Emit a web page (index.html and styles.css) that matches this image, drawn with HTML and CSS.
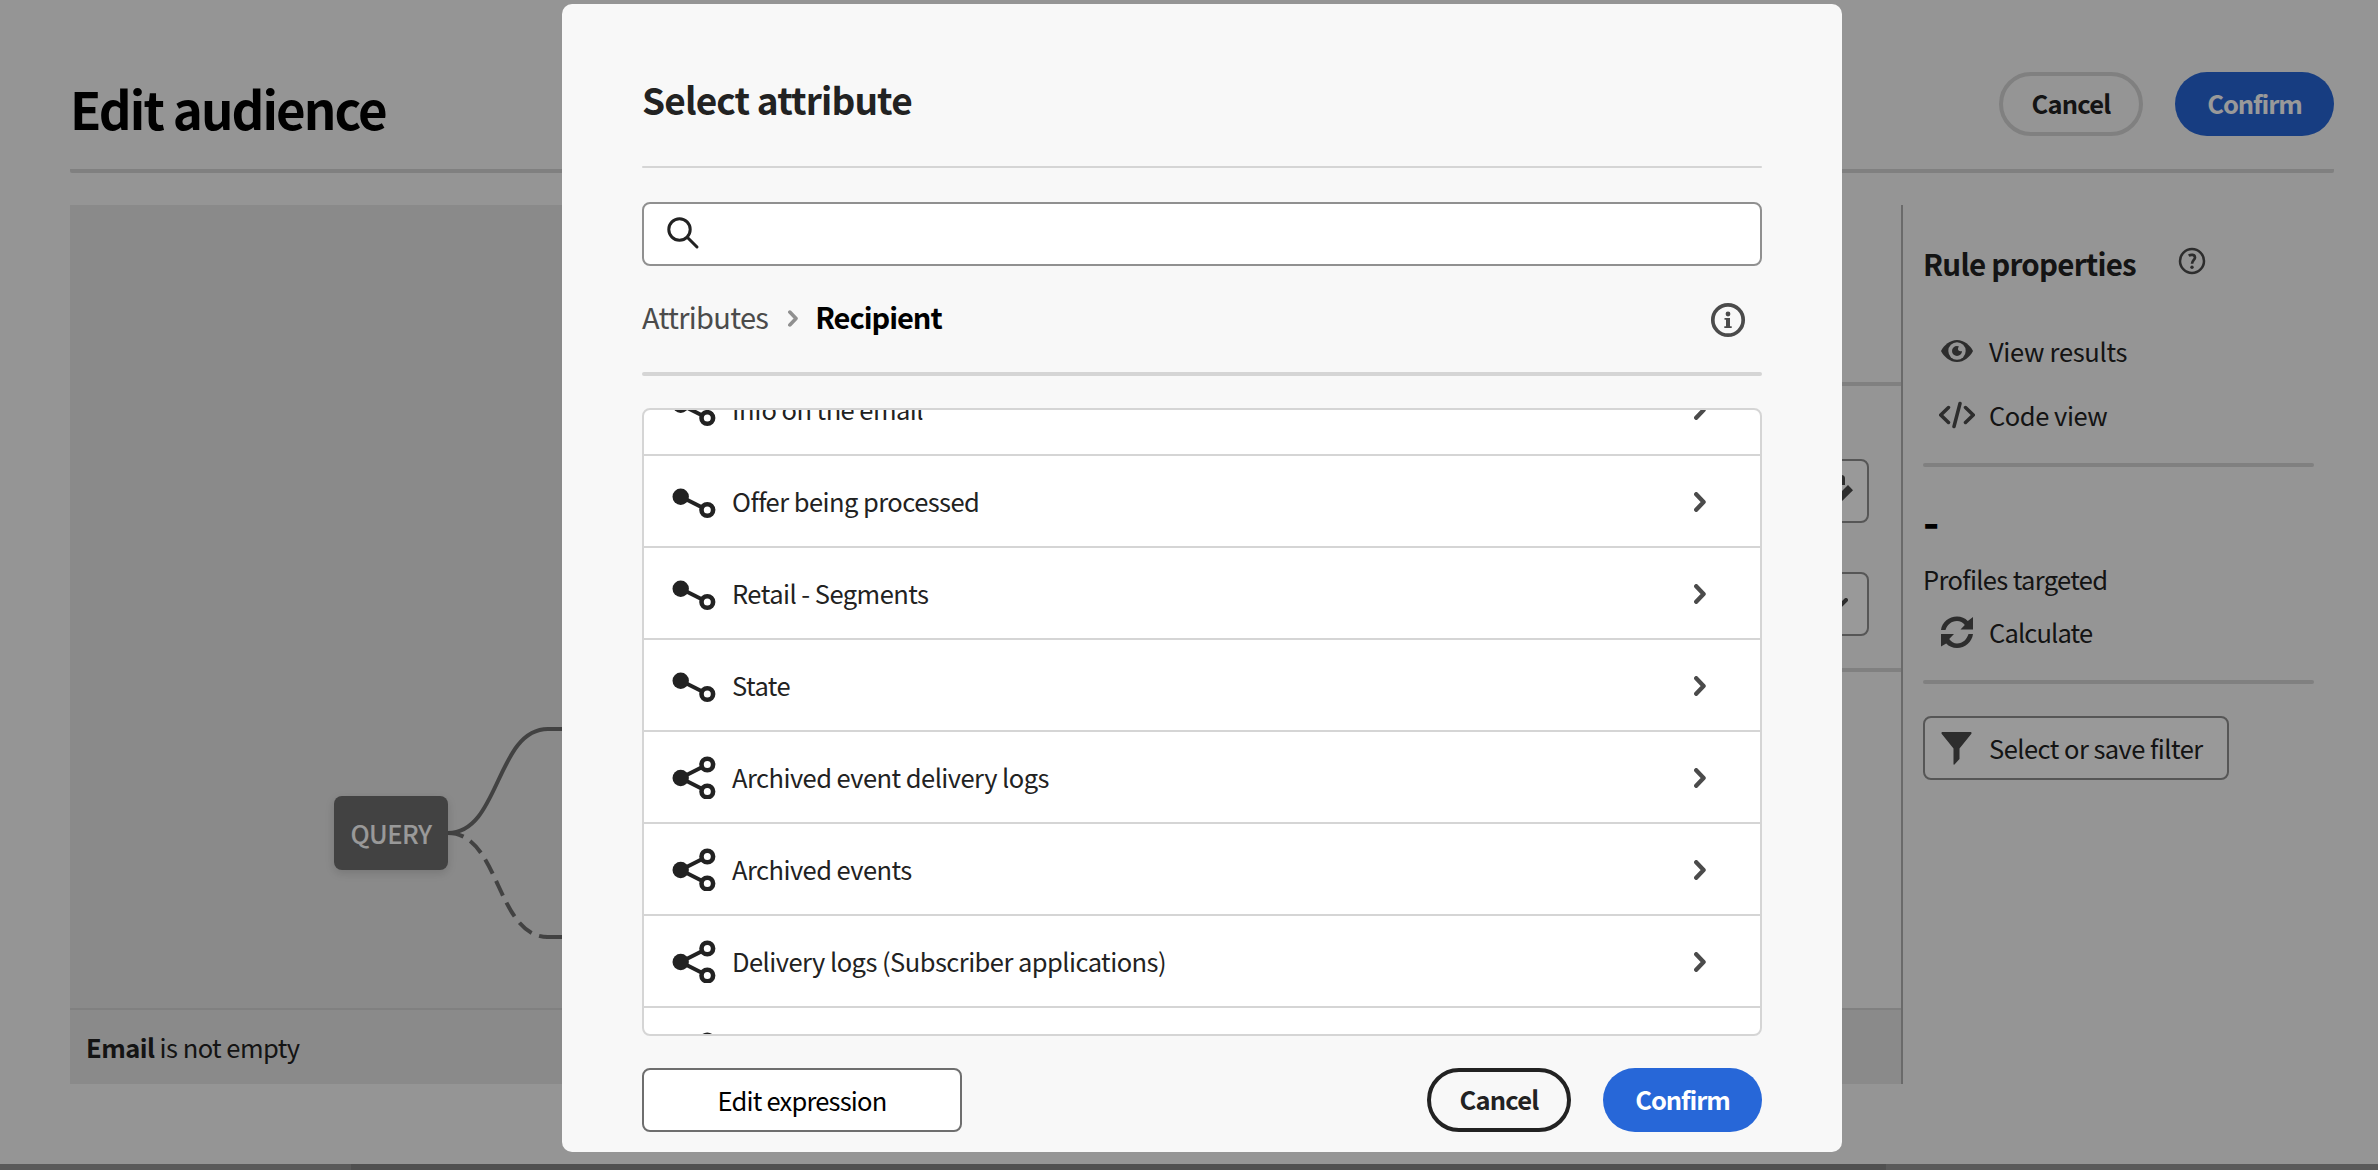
FILE: index.html
```
<!DOCTYPE html>
<html lang="en">
<head>
<meta charset="utf-8">
<title>Edit audience</title>
<link rel="stylesheet" href="styles.css">
</head>
<body>
<svg class="defs" aria-hidden="true">
  <symbol id="link-one" viewBox="0 0 44 44">
    <path d="M9 17.700 35.300 31" stroke="currentColor" stroke-width="4"/>
    <circle cx="8.700" cy="17.700" r="8.200" fill="currentColor"/>
    <circle cx="35.300" cy="31" r="5.800" fill="#fff" stroke="currentColor" stroke-width="4.600"/>
  </symbol>
  <symbol id="link-many" viewBox="0 0 44 44">
    <path d="M35.300 9.500 8.700 23 35.300 36.500" fill="none" stroke="currentColor" stroke-width="4"/>
    <circle cx="8.700" cy="23" r="8.200" fill="currentColor"/>
    <circle cx="35.300" cy="9.500" r="5.800" fill="#fff" stroke="currentColor" stroke-width="4.600"/>
    <circle cx="35.300" cy="36.500" r="5.800" fill="#fff" stroke="currentColor" stroke-width="4.600"/>
  </symbol>
  <symbol id="chevron" viewBox="0 0 12 20">
    <path d="M2.200 2.200 9.600 10 2.200 17.800" fill="none" stroke="currentColor" stroke-width="4.300" stroke-linecap="round" stroke-linejoin="round"/>
  </symbol>
</svg>

<div class="page">
  <header class="page-head">
    <h1 class="page-title">Edit audience</h1>
    <div class="page-actions">
      <button class="pill pill-quiet">Cancel</button>
      <button class="pill pill-accent">Confirm</button>
    </div>
  </header>
  <div class="workspace">
    <div class="editor">
      <div class="editor-top">
        <div class="canvas">
          <svg class="edges" width="1000" height="803" viewBox="70 205 1000 803">
            <path d="M448 833C500 833 496 729 548 729H600M546 937H600"/>
            <path class="dashed" d="M448 833C500 833 496 937 548 937"/>
          </svg>
          <div class="node">QUERY</div>
        </div>
        <div class="condition">
          <div class="condition-head"></div>
          <div class="condition-fields">
            <div class="field">
              <svg width="32" height="32" viewBox="0 0 32 32"><path d="M22.500 10V3.500a2 2 0 0 0-2-2H4a2 2 0 0 0-2 2V26a2 2 0 0 0 2 2h4" fill="none" stroke="currentColor" stroke-width="3"/><path d="M27 10 32 15.200 16 31 9 32 11 26z" fill="currentColor"/></svg>
            </div>
            <div class="field">
              <svg width="20" height="12" viewBox="0 0 20 12"><path d="M2 2 10 10 18 2" fill="none" stroke="currentColor" stroke-width="4" stroke-linecap="round"/></svg>
            </div>
          </div>
        </div>
      </div>
      <div class="summary"><b>Email</b> is not empty</div>
    </div>
    <aside class="props">
      <div class="props-head">
        <h2 class="props-title">Rule properties</h2>
        <svg class="help" width="28" height="28" viewBox="0 0 28 28" fill="none" stroke="currentColor"><circle cx="14" cy="14" r="12" stroke-width="2.500"/><path d="M10.700 8.700C13 7.300 17 7.500 17 10.400c0 2.600-3 3.200-3 6.400" stroke-width="2.700"/><circle cx="14" cy="20.300" r="1.700" fill="currentColor" stroke="none"/></svg>
      </div>
      <div class="action">
        <svg width="36" height="36" viewBox="0 0 36 36"><path d="M2 18C5 12 11 7 18 7s13 5 16 11c-3 6-9 11-16 11S5 24 2 18z" fill="currentColor"/><circle cx="18" cy="18" r="8.700" fill="#f8f8f8"/><path d="M18 13a5 5 0 1 0 5 5c-2 1-4.500-.5-4-2.500.2-1 .6-1.500 1-2-.5-.3-1.200-.5-2-.5z" fill="currentColor"/></svg>
        <span class="act-view">View results</span>
      </div>
      <div class="action">
        <svg width="36" height="36" viewBox="0 0 36 36" fill="none" stroke="currentColor" stroke-width="3.500" stroke-linecap="round"><path d="M9.500 10.500 1.800 18 9.500 25.500M26.500 10.500 34.200 18 26.500 25.500M21 6.500 15 29.500" /></svg>
        <span class="act-code">Code view</span>
      </div>
      <hr class="rule">
      <div class="count">-</div>
      <div class="count-label">Profiles targeted</div>
      <div class="action action-calc">
        <svg width="36" height="36" viewBox="0 0 36 36" fill="currentColor"><path d="M2 16C3 8 10 2.500 18 2.500c4.500 0 8 1.700 10.800 4.500L34 3v12.500H21.500l4.300-4.500C24 8.500 21 7 18 7 12 7 8 11 6.500 16zM34 20C33 28 26 34 18 34c-4.500 0-8-1.700-10.800-4.500L2 32.500V20h13l-4.800 5C12 27.500 15 29.500 18 29.500c6 0 10-4.500 11.500-9.500z"/></svg>
        <span class="act-calc">Calculate</span>
      </div>
      <hr class="rule">
      <button class="filter-btn">
        <svg width="32" height="34" viewBox="0 0 32 34"><path d="M1 1H30Q31 2 30.200 3L18.500 17.500V28L13.500 33.500Q12.500 34 12.500 33V17.500L.8 3Q0 2 1 1z" fill="currentColor"/></svg>
        <span>Select or save filter</span>
      </button>
    </aside>
  </div>
  <div class="scroll-strip"><div class="scroll-thumb"></div></div>
</div>

<div class="overlay">
  <section class="dialog">
    <h2 class="dialog-title">Select attribute</h2>
    <hr class="thin">
    <div class="search">
      <svg width="34" height="34" viewBox="0 0 34 34" fill="none" stroke="currentColor" stroke-width="3" stroke-linecap="round"><circle cx="13.500" cy="13.500" r="10.700"/><path d="M21.500 21.500 31 31"/></svg>
    </div>
    <nav class="crumbs">
      <span class="crumb">Attributes</span>
      <svg class="crumb-sep" width="10" height="17" viewBox="0 0 12 20"><use href="#chevron"/></svg>
      <span class="crumb crumb-here">Recipient</span>
      <svg class="info" width="36" height="36" viewBox="0 0 36 36"><circle cx="18" cy="18" r="15.200" fill="none" stroke="currentColor" stroke-width="3.700"/><circle cx="18" cy="12" r="2.400" fill="currentColor"/><path d="M14.500 16H20v8.300h1.700V26H14.300v-1.700H16V17.700h-1.500z" fill="currentColor"/></svg>
    </nav>
    <hr class="thick">
    <div class="list">
      <div class="rows">
        <div class="row"><svg class="kind"><use href="#link-one"/></svg><span class="label">Info on the email</span><svg class="go"><use href="#chevron"/></svg></div>
        <div class="row"><svg class="kind"><use href="#link-one"/></svg><span class="label">Offer being processed</span><svg class="go"><use href="#chevron"/></svg></div>
        <div class="row"><svg class="kind"><use href="#link-one"/></svg><span class="label">Retail - Segments</span><svg class="go"><use href="#chevron"/></svg></div>
        <div class="row"><svg class="kind"><use href="#link-one"/></svg><span class="label">State</span><svg class="go"><use href="#chevron"/></svg></div>
        <div class="row"><svg class="kind"><use href="#link-many"/></svg><span class="label">Archived event delivery logs</span><svg class="go"><use href="#chevron"/></svg></div>
        <div class="row"><svg class="kind"><use href="#link-many"/></svg><span class="label">Archived events</span><svg class="go"><use href="#chevron"/></svg></div>
        <div class="row"><svg class="kind"><use href="#link-many"/></svg><span class="label">Delivery logs (Subscriber applications)</span><svg class="go"><use href="#chevron"/></svg></div>
        <div class="row"><svg class="kind"><use href="#link-many"/></svg></div>
      </div>
    </div>
    <footer class="dialog-foot">
      <button class="edit-btn">Edit expression</button>
      <div class="foot-actions">
        <button class="pill pill-outline">Cancel</button>
        <button class="pill pill-accent">Confirm</button>
      </div>
    </footer>
  </section>
</div>
</body>
</html>
```
FILE: styles.css
```
* { box-sizing: border-box; }
body {
  margin: 0;
  width: 2378px;
  height: 1170px;
  overflow: hidden;
  font-family: "Noto Sans CJK SC", "Noto Sans", sans-serif;
  font-size: 25.5px;
  line-height: 36px;
  letter-spacing: -.54px;
  color: #222;
  background: #f8f8f8;
}
h1, h2 { margin: 0; font-weight: 700; white-space: nowrap; }
hr { margin: 0; border: 0; border-radius: 2px; background: #d5d5d5; }
button { font: inherit; letter-spacing: inherit; color: inherit; padding: 0; margin: 0; }
svg { display: block; flex: none; }
span { white-space: nowrap; }
.defs { position: absolute; width: 0; height: 0; }

/* page behind the dialog */
.page { height: 1170px; display: flex; flex-direction: column; }
.page-head {
  height: 104px;
  margin: 69px 44px 0 70px;
  border-bottom: 4px solid #d5d5d5;
  border-radius: 2px;
  display: flex;
  justify-content: space-between;
}
.page-title { font-size: 51px; line-height: 78px; letter-spacing: -1.9px; color: #000; }
.page-actions { display: flex; gap: 32px; padding-top: 3px; }

.pill {
  width: 144px;
  height: 64px;
  padding-bottom: 3px;
  border-radius: 32px;
  border: 4px solid #d5d5d5;
  background: transparent;
  font-weight: 700;
  letter-spacing: -.8px;
}
.pill-outline { border-color: #222; }
.pill-accent { width: 159px; border: 0; background: #2767d8; color: #fff; letter-spacing: -1.1px; }

.workspace { display: flex; height: 879px; margin: 32px 44px 0 70px; }
.editor { width: 1833px; border-right: 2px solid #b1b1b1; display: flex; flex-direction: column; }
.editor-top { height: 803px; display: flex; }
.canvas { width: 1000px; background: #e6e6e6; position: relative; }
.edges { fill: none; stroke: #6e6e6e; stroke-width: 4; }
.dashed { stroke-dasharray: 16 8; }
.node {
  position: absolute;
  left: 264px;
  top: 591px;
  width: 114px;
  height: 74px;
  border-radius: 8px;
  background: #6e6e6e;
  color: #fff;
  display: flex;
  align-items: center;
  justify-content: center;
  font-weight: 500;
  box-shadow: 0 3px 10px rgba(0, 0, 0, .14);
}
.condition { flex: 1; }
.condition-head { height: 181px; border-bottom: 4px solid #d5d5d5; }
.condition-fields {
  height: 286px;
  padding: 73px 32px 0 40px;
  border-bottom: 4px solid #d5d5d5;
  display: flex;
  flex-direction: column;
  gap: 49px;
}
.field {
  height: 64px;
  border: 2px solid #8f8f8f;
  border-radius: 8px;
  background: #fff;
  color: #4b4b4b;
  display: flex;
  align-items: center;
  justify-content: flex-end;
  padding-right: 14px;
}
.field + .field { padding-right: 19px; }
.summary {
  flex: 1;
  border-top: 2px solid #d5d5d5;
  background: #e6e6e6;
  padding: 19px 16px;
}

.props { flex: 1; padding: 39px 20px 0; }
.props-head { display: flex; gap: 42px; height: 83px; }
.props-title { font-size: 29.5px; line-height: 38px; letter-spacing: -.75px; }
.help { margin-top: 3px; color: #4b4b4b; }
.action { display: flex; gap: 14px; height: 48px; margin: 0 0 16px 16px; align-items: center; }
.action svg { color: #4b4b4b; }
.act-view { letter-spacing: -.3px; }
.act-code { letter-spacing: -.45px; }
.act-calc { letter-spacing: -.85px; }
.rule { height: 4px; margin-top: 24px; }
.count {
  height: 94px;
  font-size: 44px;
  font-weight: 700;
  line-height: 107px;
  color: #000;
}
.count-label { height: 36px; letter-spacing: -.65px; }
.action-calc { margin: 11px 0 0 16px; }
.filter-btn {
  display: flex;
  align-items: center;
  width: 306px;
  height: 64px;
  margin-top: 32px;
  padding-left: 16px;
  gap: 16px;
  border: 2px solid #8f8f8f;
  border-radius: 8px;
  background: #fff;
}
.filter-btn svg { color: #4b4b4b; }

.scroll-strip { margin-top: auto; height: 6px; background: #969696; }
.scroll-thumb { margin-left: 351px; width: 1535px; height: 6px; background: #868686; }

/* dialog */
.overlay {
  position: absolute;
  inset: 0;
  background: rgba(0, 0, 0, .4);
  display: flex;
  justify-content: center;
  align-items: flex-start;
  padding: 4px 0 0 26px;
}
.dialog {
  width: 1280px;
  height: 1148px;
  padding: 66px 80px 0;
  border-radius: 10px;
  background: #f8f8f8;
}
.dialog-title { font-size: 37px; line-height: 59px; height: 96px; letter-spacing: -.85px; }
.thin { height: 2px; }
.search {
  height: 64px;
  margin-top: 34px;
  border: 2px solid #909090;
  border-radius: 8px;
  background: #fff;
  padding: 12px 22px;
}
.crumbs { display: flex; align-items: center; height: 106px; font-size: 29px; }
.crumb { color: #4b4b4b; margin-bottom: 6px; letter-spacing: -.72px; }
.crumb-here { color: #000; font-weight: 700; letter-spacing: -1px; }
.crumb-sep { margin: 0 17px 2px 20px; color: #909090; }
.info { margin: 2px 16px 0 auto; color: #4b4b4b; }
.thick { height: 4px; }
.list {
  height: 628px;
  margin-top: 32px;
  border: 2px solid #d5d5d5;
  border-radius: 8px;
  background: #fff;
  overflow: hidden;
}
.rows { margin-top: -46px; }
.row {
  display: flex;
  align-items: center;
  height: 92px;
  padding: 0 54px 0 28px;
  border-bottom: 2px solid #d5d5d5;
}
.kind { width: 44px; height: 44px; }
.label { margin-left: 16px; }
.go { width: 12px; height: 20px; margin: 2px 0 0 auto; color: #4b4b4b; }
.dialog-foot { display: flex; justify-content: space-between; margin-top: 32px; }
.edit-btn {
  width: 320px;
  height: 64px;
  border: 2px solid #6e6e6e;
  border-radius: 8px;
  background: #fff;
  color: #000;
  letter-spacing: -.8px;
}
.foot-actions { display: flex; gap: 32px; }
```
